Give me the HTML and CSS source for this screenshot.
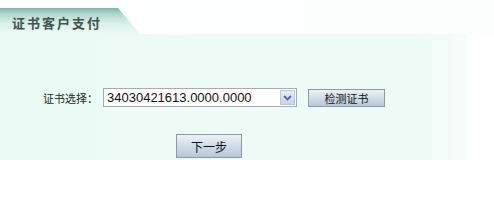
FILE: index.html
```html
<!DOCTYPE html>
<html lang="zh-CN">
<head>
  <meta charset="UTF-8" />
  <title>证书客户支付</title>
  <link rel="stylesheet" href="styles.css">
</head>
<body>
  <div class="tab-bar">
    <div class="tab">证书客户支付</div>
  </div>

  <div class="panel">
    <div class="cert-row">
      <span class="cert-label">证书选择：</span>
      <div class="cert-select">
        <span class="cert-value">34030421613.0000.0000</span>
        <span class="cert-arrow">
          <svg width="9" height="6" viewBox="0 0 9 6"><path d="M1 1 L4.5 4.5 L8 1" fill="none" stroke="#4d6aa8" stroke-width="1.8"/></svg>
        </span>
      </div>
      <button class="btn btn-check">检测证书</button>
    </div>

    <div class="next-row">
      <button class="btn btn-next">下一步</button>
    </div>
  </div>
</body>
</html>
```

FILE: styles.css
```css
body {
  margin: 0;
  background: #ffffff;
  font-family: "Liberation Sans", "Noto Sans CJK SC", sans-serif;
  font-size: 12px;
  color: #222;
}

.tab-bar {
  padding-top: 8px;
  height: 26px;
  background: linear-gradient(to right, #ffffff 0%, #fbfefd 100%);
}

.tab {
  width: 140px;
  height: 26px;
  box-sizing: border-box;
  padding: 5px 0 0 12px;
  font-size: 13px;
  font-weight: bold;
  letter-spacing: 2px;
  color: #44524f;
  background: linear-gradient(to bottom, #7fb7ab 0%, #b3d9d0 25%, #d9f0ea 60%, #eefaf6 100%);
  clip-path: polygon(0 0, 118px 0, 140px 26px, 0 26px);
}

.panel {
  width: 468px;
  height: 126px;
  box-sizing: border-box;
  background: linear-gradient(to right, #ecfaf6 0%, #effbf7 90%, #f8fdfb 100%);
  padding-top: 54px;
}

.cert-row {
  display: flex;
  align-items: center;
  height: 19px;
}

.cert-label {
  flex-shrink: 0;
  white-space: nowrap;
  margin-left: 43px;
  width: 60px;
  font-size: 11px;
  color: #222;
}

.cert-select {
  flex-shrink: 0;
  width: 194px;
  height: 19px;
  box-sizing: border-box;
  border: 1px solid #a5acb2;
  background: #fff;
  display: flex;
  align-items: center;
  justify-content: space-between;
}

.cert-value {
  padding-left: 3px;
  font-size: 13px;
  color: #111;
}

.cert-arrow {
  width: 15px;
  height: 15px;
  margin-right: 1px;
  background: linear-gradient(to bottom, #e6ecf9 0%, #c7d3ee 100%);
  border: 1px solid #b9c6e3;
  box-sizing: border-box;
  display: flex;
  align-items: center;
  justify-content: center;
}

.btn {
  font-family: "Liberation Sans", "Noto Sans CJK SC", sans-serif;
  font-size: 12px;
  color: #111;
  border: 1px solid #8d9aa6;
  background: linear-gradient(to bottom, #eef2f6 0%, #cfdae6 55%, #b9c7d9 100%);
  padding: 0;
  cursor: pointer;
}

.btn-check {
  flex-shrink: 0;
  margin-left: 11px;
  width: 77px;
  height: 18px;
  font-size: 11px;
}

.next-row {
  display: flex;
  margin-top: 27px;
  padding-left: 176px;
}

.btn-next {
  width: 66px;
  height: 24px;
  font-size: 12px;
}
```
